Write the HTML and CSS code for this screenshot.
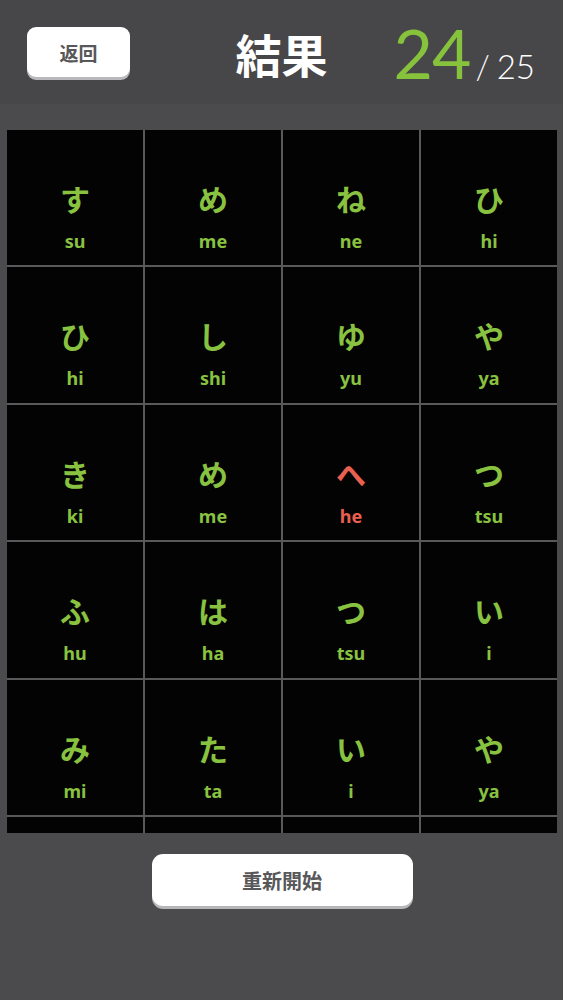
FILE: index.html
```html
<!DOCTYPE html>
<html lang="ja">
<head>
<meta charset="utf-8">
<title>結果</title>
<link rel="stylesheet" href="styles.css">
</head>
<body>
<header class="topbar">
  <button class="back-btn">返回</button>
  <h1 class="title">結果</h1>
  <div class="score"><span class="score-num">24</span><span class="score-total">/ 25</span></div>
</header>
<main class="content">
  <div class="board">
    <div class="cell"><span class="kana">す</span><span class="romaji">su</span></div>
    <div class="cell"><span class="kana">め</span><span class="romaji">me</span></div>
    <div class="cell"><span class="kana">ね</span><span class="romaji">ne</span></div>
    <div class="cell"><span class="kana">ひ</span><span class="romaji">hi</span></div>
    <div class="cell"><span class="kana">ひ</span><span class="romaji">hi</span></div>
    <div class="cell"><span class="kana">し</span><span class="romaji">shi</span></div>
    <div class="cell"><span class="kana">ゆ</span><span class="romaji">yu</span></div>
    <div class="cell"><span class="kana">や</span><span class="romaji">ya</span></div>
    <div class="cell"><span class="kana">き</span><span class="romaji">ki</span></div>
    <div class="cell"><span class="kana">め</span><span class="romaji">me</span></div>
    <div class="cell wrong"><span class="kana">へ</span><span class="romaji">he</span></div>
    <div class="cell"><span class="kana">つ</span><span class="romaji">tsu</span></div>
    <div class="cell"><span class="kana">ふ</span><span class="romaji">hu</span></div>
    <div class="cell"><span class="kana">は</span><span class="romaji">ha</span></div>
    <div class="cell"><span class="kana">つ</span><span class="romaji">tsu</span></div>
    <div class="cell"><span class="kana">い</span><span class="romaji">i</span></div>
    <div class="cell"><span class="kana">み</span><span class="romaji">mi</span></div>
    <div class="cell"><span class="kana">た</span><span class="romaji">ta</span></div>
    <div class="cell"><span class="kana">い</span><span class="romaji">i</span></div>
    <div class="cell"><span class="kana">や</span><span class="romaji">ya</span></div>
    <div class="cell"></div>
    <div class="cell"></div>
    <div class="cell"></div>
    <div class="cell"></div>
  </div>
  <button class="restart-btn">重新開始</button>
</main>
</body>
</html>
```

FILE: styles.css
```css
html, body {
  margin: 0;
  padding: 0;
}
body {
  background: #4b4a4d;
  width: 563px;
  height: 1000px;
  overflow: hidden;
  font-family: "Noto Sans CJK JP", "Noto Sans", sans-serif;
}
.topbar {
  height: 104px;
  background: #474649;
  display: grid;
  grid-template-columns: 1fr auto 1fr;
  align-items: center;
  padding: 0 27px;
  box-sizing: border-box;
}
.back-btn {
  justify-self: start;
  width: 103px;
  height: 50px;
  border: none;
  border-radius: 9px;
  background: #ffffff;
  box-shadow: 0 3px 0 #b9b9bb;
  color: #58585a;
  font-family: "Noto Sans CJK JP", sans-serif;
  font-size: 19px;
  font-weight: 700;
  padding: 0;
}
.title {
  margin: 0;
  color: #ffffff;
  font-size: 46px;
  font-weight: 700;
  line-height: 1;
  padding-top: 2px;
}
.score {
  justify-self: end;
  display: flex;
  align-items: baseline;
  gap: 5px;
  margin-top: 2px;
  margin-right: 1px;
}
.score-num {
  color: #86c23c;
  font-family: "Lato", sans-serif;
  font-weight: 400;
  font-size: 68px;
  line-height: 1;
  letter-spacing: -1px;
}
.score-total {
  color: #ffffff;
  font-family: "Lato", sans-serif;
  font-weight: 300;
  font-size: 33px;
  line-height: 1;
  word-spacing: -2px;
}
.content {
  display: flex;
  flex-direction: column;
  align-items: center;
  padding-top: 26px;
}
.board {
  align-self: flex-start;
  margin-left: 7px;
  width: 550px;
  height: 703px;
  overflow: hidden;
  background: #59585b;
  display: grid;
  grid-template-columns: repeat(4, 136px);
  grid-auto-rows: 135.4px;
  gap: 2px;
}
.cell {
  background: #030303;
  display: flex;
  flex-direction: column;
  align-items: center;
  justify-content: flex-start;
  gap: 17px;
  padding-top: 52px;
  box-sizing: border-box;
  color: #88c240;
}
.cell.wrong {
  color: #ea6050;
}
.kana {
  font-family: "Noto Sans CJK JP", sans-serif;
  font-size: 30px;
  font-weight: 700;
  line-height: 32px;
}
.romaji {
  font-family: "Noto Sans", sans-serif;
  font-size: 18px;
  font-weight: 700;
  line-height: 20px;
}
.restart-btn {
  margin-top: 21px;
  margin-left: 1px;
  width: 261px;
  height: 52px;
  border: none;
  border-radius: 11px;
  background: #ffffff;
  box-shadow: 0 3px 0 #b6b6b8;
  color: #58585a;
  font-family: "Noto Sans CJK JP", sans-serif;
  font-size: 20px;
  font-weight: 700;
  padding: 0;
}
```
